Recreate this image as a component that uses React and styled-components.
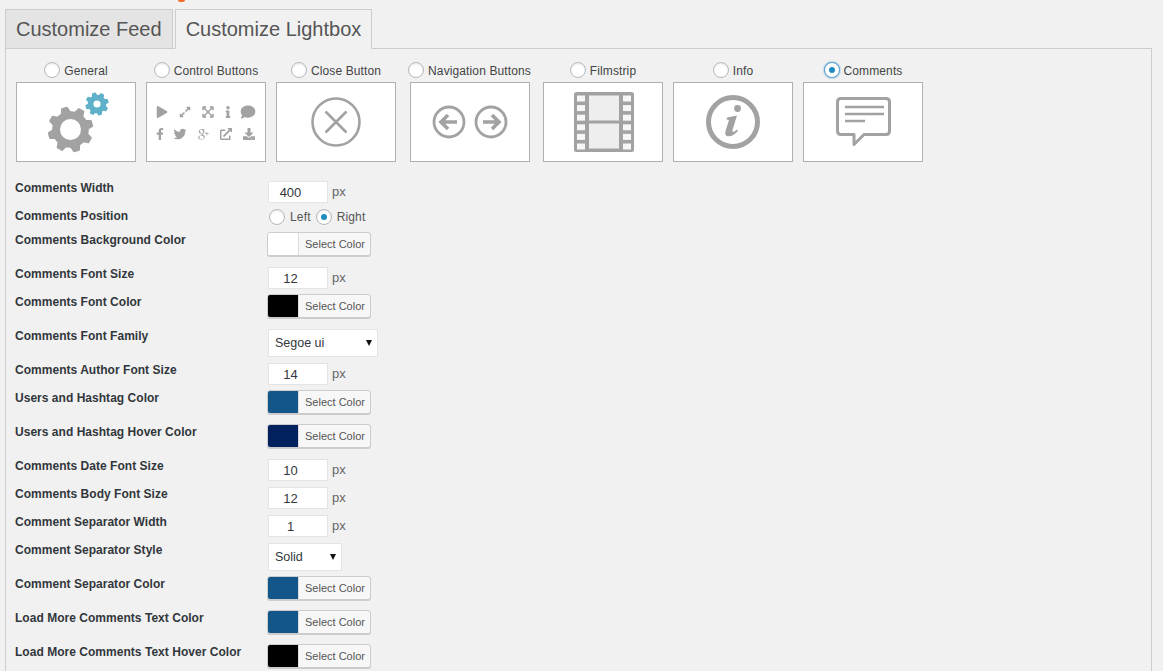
import React from 'react';
import styled, { createGlobalStyle } from 'styled-components';
import {
    FaPlay, FaExpandAlt, FaExpandArrowsAlt, FaInfo, FaComment,
    FaFacebookF, FaTwitter, FaExternalLinkAlt, FaDownload
} from 'react-icons/fa';
import { TiSocialGooglePlus } from 'react-icons/ti';

const GRAY = '#a2a2a2';

const GlobalStyle = createGlobalStyle`
    html, body {
        margin: 0;
        padding: 0;
        background: #f1f1f1;
    }
    body {
        font-family: "Liberation Sans", Arial, sans-serif;
        color: #444;
    }
`;

const Page = styled.div`
    height: 100vh;
    overflow: hidden;
    padding: 0 11px 0 5px;
    box-sizing: border-box;
`;
const TopStrip = styled.div`
    height: 9px;
    padding-left: 173px;
`;
const OrangeMark = styled.div`
    width: 7px;
    height: 2px;
    border-radius: 0 0 4px 4px;
    background: #f56e28;
`;
const Tabs = styled.div`
    display: flex;
    gap: 2px;
    margin-bottom: -1px;
    position: relative;
    z-index: 1;
`;
const Tab = styled.div`
    height: 38px;
    box-sizing: content-box;
    padding: 0 10px;
    line-height: 39px;
    font-size: 20px;
    color: #555;
    border: 1px solid #ccc;
    border-bottom: ${p => (p.$active ? '1px solid #f1f1f1' : '1px solid #ccc')};
    background: ${p => (p.$active ? '#f1f1f1' : '#e4e4e4')};
`;
const Panel = styled.div`
    border: 1px solid #ccc;
    padding: 12px 10px 0;
`;
const Options = styled.div`
    display: flex;
    gap: 10px;
    margin-bottom: 19px;
`;
const Option = styled.div`
    width: ${p => p.$width || 120}px;
    display: flex;
    flex-direction: column;
    align-items: center;
`;
const Radio = styled.span`
    width: 16px;
    height: 16px;
    flex: none;
    box-sizing: border-box;
    border-radius: 50%;
    border: 1px solid ${p => (p.$focus ? '#5b9dd9' : '#b4b9be')};
    background: #fff;
    box-shadow: ${p => (p.$focus
        ? '0 0 2px rgba(30,140,190,.8)'
        : 'inset 0 1px 2px rgba(0,0,0,.1)')};
    display: flex;
    align-items: center;
    justify-content: center;
    &::before {
        content: "";
        display: ${p => (p.$checked ? 'block' : 'none')};
        width: 6px;
        height: 6px;
        border-radius: 50%;
        background: #1e8cbe;
    }
`;
const OptionLabel = styled.label`
    display: flex;
    align-items: center;
    gap: 4px;
    height: 19px;
    padding-bottom: 2px;
    font-size: 12px;
    letter-spacing: 0.12px;
    color: #444;
    white-space: nowrap;
    ${Radio} {
        margin-top: -2px;
    }
`;
const Card = styled.div`
    width: 120px;
    height: 80px;
    box-sizing: border-box;
    border: 1px solid #b0b0b0;
    background: #fff;
    svg.art {
        display: block;
    }
`;
const Row = styled.div`
    display: flex;
    height: ${p => p.$height}px;
    margin-left: -1px;
`;
const Label = styled.div`
    width: 252px;
    flex: none;
    padding-top: 1px;
    line-height: 13px;
    font-size: 12px;
    font-weight: bold;
    letter-spacing: 0.03px;
    color: #32373c;
    white-space: nowrap;
`;
const Controls = styled.div`
    display: flex;
    align-items: flex-start;
    gap: 4px;
`;
const NumberInput = styled.input`
    width: 60px;
    height: 22px;
    box-sizing: border-box;
    margin: 0 0 0 1px;
    padding: 0 15px 0 0;
    border: 1px solid #e4e4e4;
    outline: none;
    background: #fff;
    text-align: center;
    font-family: inherit;
    font-size: 13px;
    color: #32373c;
`;
const Unit = styled.span`
    font-size: 13px;
    line-height: 22px;
    color: #666;
`;
const ColorButton = styled.div`
    display: flex;
    width: 104px;
    height: 24px;
    margin-top: -1px;
    box-sizing: border-box;
    border: 1px solid #ccc;
    border-radius: 3px;
    box-shadow: 0 1px 0 #ccc;
    background: #f7f7f7;
    overflow: hidden;
`;
const Swatch = styled.span`
    width: 30px;
    flex: none;
    background: ${p => p.$color};
    border-right: 1px solid #ddd;
`;
const ColorText = styled.span`
    flex: 1;
    padding-left: 1px;
    text-align: center;
    line-height: 22px;
    font-size: 11px;
    color: #555;
`;
const SelectBox = styled.div`
    width: ${p => p.$width}px;
    height: 28px;
    margin-left: 1px;
    box-sizing: border-box;
    border: 1px solid #e4e4e4;
    background: #fff;
    padding-left: 6px;
    padding-right: 5px;
    display: flex;
    align-items: center;
    justify-content: space-between;
    font-size: 12.5px;
    color: #32373c;
    &::after {
        content: "";
        border-left: 3.5px solid transparent;
        border-right: 3.5px solid transparent;
        border-top: 6px solid #111;
    }
`;
const Positions = styled.div`
    display: flex;
    align-items: center;
    gap: 5px;
    margin: 0 0 0 2px;
    height: 16px;
    font-size: 12px;
    letter-spacing: 0.15px;
    color: #555;
`;

// polygon points for a gear, rot is in radians
const gearPath = (cx, cy, outer, inner, teeth, rot) => {
    const step = (Math.PI * 2) / teeth;
    let d = '';
    for (let i = 0; i < teeth; i++) {
        const a = i * step + rot - Math.PI / 2;
        const pts = [
            [inner, a - step * 0.30],
            [outer, a - step * 0.15],
            [outer, a + step * 0.15],
            [inner, a + step * 0.30]
        ];
        pts.forEach(([r, t], j) => {
            const x = (cx + r * Math.cos(t)).toFixed(2);
            const y = (cy + r * Math.sin(t)).toFixed(2);
            d += `${i === 0 && j === 0 ? 'M' : 'L'}${x} ${y} `;
        });
    }
    return d + 'Z';
};

const Art = ({ children }) => (
    <svg className="art" width="118" height="78" viewBox="0 0 118 78">{children}</svg>
);

const GeneralArt = () => {
    const rot = -16 * Math.PI / 180;
    return (
        <Art>
            <path d={gearPath(53.5, 46.5, 22, 17.5, 8, rot)} fill={GRAY} stroke={GRAY} strokeWidth="2" strokeLinejoin="round" />
            <circle cx="53.5" cy="46.5" r="10.5" fill="#fff" />
            <path d={gearPath(80, 21, 11, 8.5, 8, rot)} fill="#5fb0c9" stroke="#5fb0c9" strokeWidth="1.5" strokeLinejoin="round" />
            <circle cx="80" cy="21" r="3.6" fill="#fff" />
        </Art>
    );
};

const smallIcons = [
    [FaPlay, 15, 29, 12], [FaExpandAlt, 38, 29, 12], [FaExpandArrowsAlt, 61, 29, 13],
    [FaInfo, 81, 29, 12], [FaComment, 101, 29, 15],
    [FaFacebookF, 13, 51, 12], [FaTwitter, 33, 51, 13], [TiSocialGooglePlus, 56, 51, 17],
    [FaExternalLinkAlt, 79, 51, 12], [FaDownload, 102, 51, 12]
];

const ControlArt = () => (
    <Art>
        {smallIcons.map(([Icon, x, y, size], i) => (
            <Icon key={i} x={x - size / 2} y={y - size / 2} size={size} color={GRAY} />
        ))}
    </Art>
);

const CloseArt = () => (
    <Art>
        <g fill="none" stroke={GRAY} strokeWidth="2.6">
            <circle cx="59" cy="39" r="23.5" />
            <path d="M48.5 28.5 L69.5 49.5 M69.5 28.5 L48.5 49.5" />
        </g>
    </Art>
);

const NavArt = () => (
    <Art>
        <g fill="none" stroke={GRAY}>
            <circle cx="38" cy="39" r="15" strokeWidth="2.8" />
            <circle cx="80" cy="39" r="15" strokeWidth="2.8" />
            <path d="M46 39 H31 M37 32 L30 39 L37 46" strokeWidth="3.6" />
            <path d="M72 39 H87 M81 32 L88 39 L81 46" strokeWidth="3.6" />
        </g>
    </Art>
);

const FilmArt = () => {
    const holes = [0, 1, 2, 3, 4, 5];
    return (
        <Art>
            <rect x="30" y="9" width="60" height="60" rx="2.5" fill={GRAY} />
            <rect x="45" y="12.5" width="30" height="25" fill="#eee" />
            <rect x="45" y="40.5" width="30" height="25" fill="#eee" />
            {holes.map(i => (
                <React.Fragment key={i}>
                    <rect x="33" y={12.5 + i * 9.6} width="8" height="6" fill="#f6f6f6" />
                    <rect x="79" y={12.5 + i * 9.6} width="8" height="6" fill="#f6f6f6" />
                </React.Fragment>
            ))}
        </Art>
    );
};

const InfoArt = () => (
    <Art>
        <circle cx="59" cy="39" r="24.5" fill="none" stroke={GRAY} strokeWidth="5" />
        <circle cx="63.5" cy="25.5" r="3.4" fill={GRAY} />
        <path d="M53 34.5 L63 32.5 L58.5 47 C58 49.5 60 49.5 63 46.5 L64 48 C60 52.5 56 54 52.8 53 C50.8 52 51 50 51.7 47.5 L55 37 L52.6 36.6 Z" fill={GRAY} />
    </Art>
);

const CommentArt = () => (
    <Art>
        <path d="M37 15.5 H82 Q85.5 15.5 85.5 19 V48 Q85.5 51.5 82 51.5 H60 L50 61.5 V51.5 H37 Q33.5 51.5 33.5 48 V19 Q33.5 15.5 37 15.5 Z" fill="none" stroke={GRAY} strokeWidth="3" strokeLinejoin="round" />
        <path d="M41 24 H80 M41 31 H80 M41 38 H61" stroke={GRAY} strokeWidth="2.6" fill="none" />
    </Art>
);

const options = [
    { label: 'General', art: <GeneralArt /> },
    { label: 'Control Buttons', art: <ControlArt /> },
    { label: 'Close Button', art: <CloseArt /> },
    { label: 'Navigation Buttons', art: <NavArt />, width: 127 },
    { label: 'Filmstrip', art: <FilmArt /> },
    { label: 'Info', art: <InfoArt /> },
    { label: 'Comments', art: <CommentArt />, checked: true }
];

const rows = [
    { label: 'Comments Width', height: 28, type: 'number', value: '400' },
    { label: 'Comments Position', height: 24, type: 'position' },
    { label: 'Comments Background Color', height: 34, type: 'color', color: '#ffffff' },
    { label: 'Comments Font Size', height: 28, type: 'number', value: '12' },
    { label: 'Comments Font Color', height: 34, type: 'color', color: '#000000' },
    { label: 'Comments Font Family', height: 34, type: 'select', value: 'Segoe ui', width: 110 },
    { label: 'Comments Author Font Size', height: 28, type: 'number', value: '14' },
    { label: 'Users and Hashtag Color', height: 34, type: 'color', color: '#12568a' },
    { label: 'Users and Hashtag Hover Color', height: 34, type: 'color', color: '#01215e' },
    { label: 'Comments Date Font Size', height: 28, type: 'number', value: '10' },
    { label: 'Comments Body Font Size', height: 28, type: 'number', value: '12' },
    { label: 'Comment Separator Width', height: 28, type: 'number', value: '1' },
    { label: 'Comment Separator Style', height: 34, type: 'select', value: 'Solid', width: 74 },
    { label: 'Comment Separator Color', height: 34, type: 'color', color: '#12568a' },
    { label: 'Load More Comments Text Color', height: 34, type: 'color', color: '#12568a' },
    { label: 'Load More Comments Text Hover Color', height: 34, type: 'color', color: '#000000' }
];

const Control = ({ row }) => {
    if (row.type === 'number') {
        return (
            <Controls>
                <NumberInput readOnly value={row.value} />
                <Unit>px</Unit>
            </Controls>
        );
    }
    if (row.type === 'color') {
        return (
            <ColorButton>
                <Swatch $color={row.color} />
                <ColorText>Select Color</ColorText>
            </ColorButton>
        );
    }
    if (row.type === 'select') {
        return <SelectBox $width={row.width}>{row.value}</SelectBox>;
    }
    return (
        <Positions>
            <Radio />
            <span>Left</span>
            <Radio $checked />
            <span>Right</span>
        </Positions>
    );
};

const App = () => (
    <Page>
        <GlobalStyle />
        <TopStrip><OrangeMark /></TopStrip>
        <Tabs>
            <Tab>Customize Feed</Tab>
            <Tab $active>Customize Lightbox</Tab>
        </Tabs>
        <Panel>
            <Options>
                {options.map(o => (
                    <Option key={o.label} $width={o.width}>
                        <OptionLabel>
                            <Radio $checked={o.checked} $focus={o.checked} />
                            {o.label}
                        </OptionLabel>
                        <Card>{o.art}</Card>
                    </Option>
                ))}
            </Options>
            {rows.map(r => (
                <Row key={r.label} $height={r.height}>
                    <Label>{r.label}</Label>
                    <Control row={r} />
                </Row>
            ))}
        </Panel>
    </Page>
);

export default App;
